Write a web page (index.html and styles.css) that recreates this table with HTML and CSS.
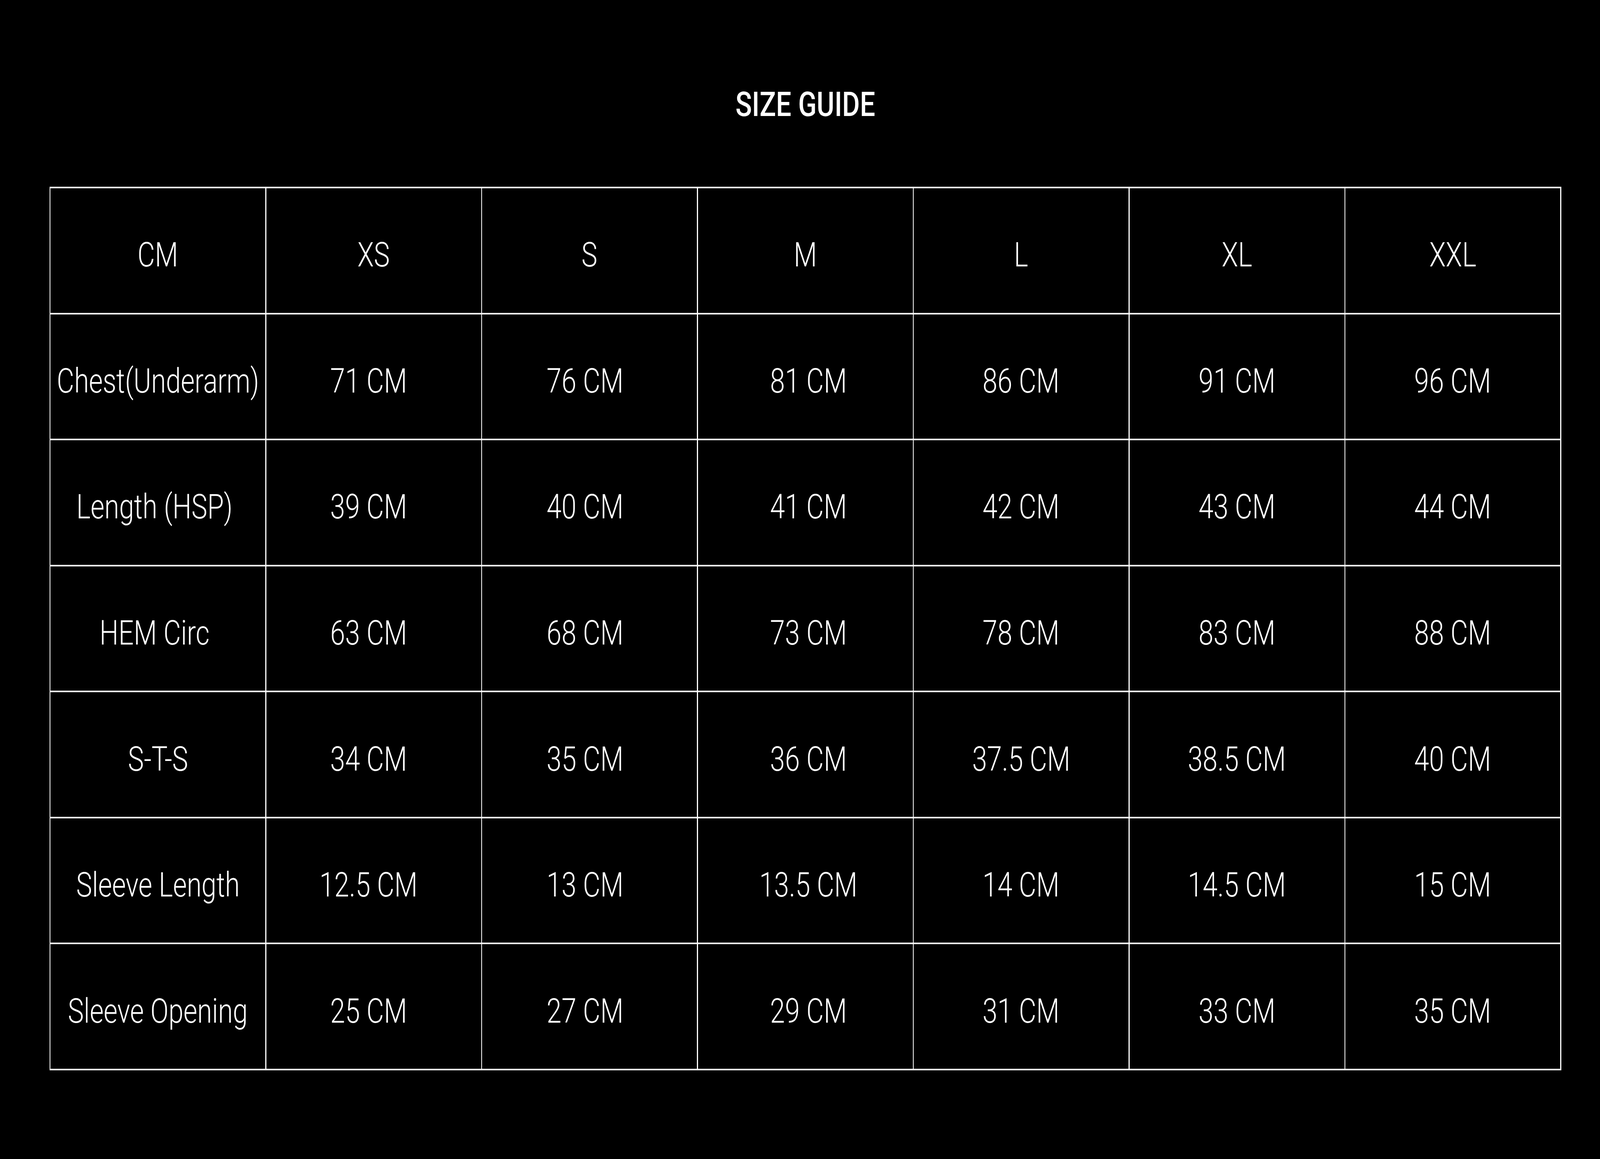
FILE: index.html
```html
<!DOCTYPE html>
<html lang="en">
<head>
<meta charset="utf-8">
<title>Size Guide</title>
<link rel="stylesheet" href="styles.css">
</head>
<body>
<main class="page">
  <h1 class="title"><span class="wide">SIZE GUIDE</span></h1>
  <div class="chart">
    <div class="cell"><span class="wide">CM</span></div>
    <div class="cell"><span class="wide">XS</span></div>
    <div class="cell"><span class="wide">S</span></div>
    <div class="cell"><span class="wide">M</span></div>
    <div class="cell"><span class="wide">L</span></div>
    <div class="cell"><span class="wide">XL</span></div>
    <div class="cell"><span class="wide">XXL</span></div>

    <div class="cell"><span class="wide">Chest(Underarm)</span></div>
    <div class="cell xs"><span class="wide">71 CM</span></div>
    <div class="cell s"><span class="wide">76 CM</span></div>
    <div class="cell m"><span class="wide">81 CM</span></div>
    <div class="cell"><span class="wide">86 CM</span></div>
    <div class="cell"><span class="wide">91 CM</span></div>
    <div class="cell"><span class="wide">96 CM</span></div>

    <div class="cell lead"><span class="wide">Length (HSP)</span></div>
    <div class="cell xs"><span class="wide">39 CM</span></div>
    <div class="cell s"><span class="wide">40 CM</span></div>
    <div class="cell m"><span class="wide">41 CM</span></div>
    <div class="cell"><span class="wide">42 CM</span></div>
    <div class="cell"><span class="wide">43 CM</span></div>
    <div class="cell"><span class="wide">44 CM</span></div>

    <div class="cell lead"><span class="wide">HEM Circ</span></div>
    <div class="cell xs"><span class="wide">63 CM</span></div>
    <div class="cell s"><span class="wide">68 CM</span></div>
    <div class="cell m"><span class="wide">73 CM</span></div>
    <div class="cell"><span class="wide">78 CM</span></div>
    <div class="cell"><span class="wide">83 CM</span></div>
    <div class="cell"><span class="wide">88 CM</span></div>

    <div class="cell"><span class="wide">S-T-S</span></div>
    <div class="cell xs"><span class="wide">34 CM</span></div>
    <div class="cell s"><span class="wide">35 CM</span></div>
    <div class="cell m"><span class="wide">36 CM</span></div>
    <div class="cell"><span class="wide">37.5 CM</span></div>
    <div class="cell"><span class="wide">38.5 CM</span></div>
    <div class="cell"><span class="wide">40 CM</span></div>

    <div class="cell"><span class="wide">Sleeve Length</span></div>
    <div class="cell xs"><span class="wide">12.5 CM</span></div>
    <div class="cell s"><span class="wide">13 CM</span></div>
    <div class="cell m"><span class="wide">13.5 CM</span></div>
    <div class="cell"><span class="wide">14 CM</span></div>
    <div class="cell"><span class="wide">14.5 CM</span></div>
    <div class="cell"><span class="wide">15 CM</span></div>

    <div class="cell"><span class="wide">Sleeve Opening</span></div>
    <div class="cell xs"><span class="wide">25 CM</span></div>
    <div class="cell s"><span class="wide">27 CM</span></div>
    <div class="cell m"><span class="wide">29 CM</span></div>
    <div class="cell"><span class="wide">31 CM</span></div>
    <div class="cell"><span class="wide">33 CM</span></div>
    <div class="cell"><span class="wide">35 CM</span></div>
  </div>
</main>
</body>
</html>
```

FILE: styles.css
```css
html, body {
  margin: 0;
  padding: 0;
  background: #000;
}

body {
  color: #fff;
  font-family: Roboto, "Liberation Sans", Arial, sans-serif;
  overflow: hidden;
}

/* horizontal measures follow the window width (reference: 7166px wide),
   vertical measures are fixed pixels (reference: 2967px tall) */
.page {
  padding: 216px 0 0 3.098vw;
  width: 94.474vw;
}

.title {
  margin: 0 0 160px 0;
  font-size: 87px;
  font-weight: 500;
  line-height: normal;
  text-align: center;
}

.wide {
  display: inline-block;
  flex-shrink: 0;
  transform-origin: center;
  white-space: nowrap;
  transform: scaleX(0.7888);
  transform: scaleX(calc(1.38 * 100vw / 7166px));
}

.title .wide {
  transform: scaleX(0.800);
  transform: scaleX(calc(1.40 * 100vw / 7166px));
}

.chart {
  display: grid;
  grid-template-columns: repeat(7, minmax(0, 1fr));
  grid-auto-rows: 318.57px;
  row-gap: 4px;
  column-gap: 0.0558vw;
  padding: 4px 0.0558vw;
  background: #fff;
  width: 94.474vw;
  box-sizing: border-box;
}

.cell {
  min-width: 0;
  background: #000;
  display: flex;
  align-items: center;
  justify-content: center;
  padding-top: 22px;
  box-sizing: border-box;
  font-size: 87px;
  font-weight: 300;
}

.cell.lead {
  padding-right: 0.45vw;
}

.cell.xs {
  padding-right: 0.642vw;
}

.cell.s {
  padding-right: 0.558vw;
}

.cell.m {
  padding-left: 0.391vw;
}
```
